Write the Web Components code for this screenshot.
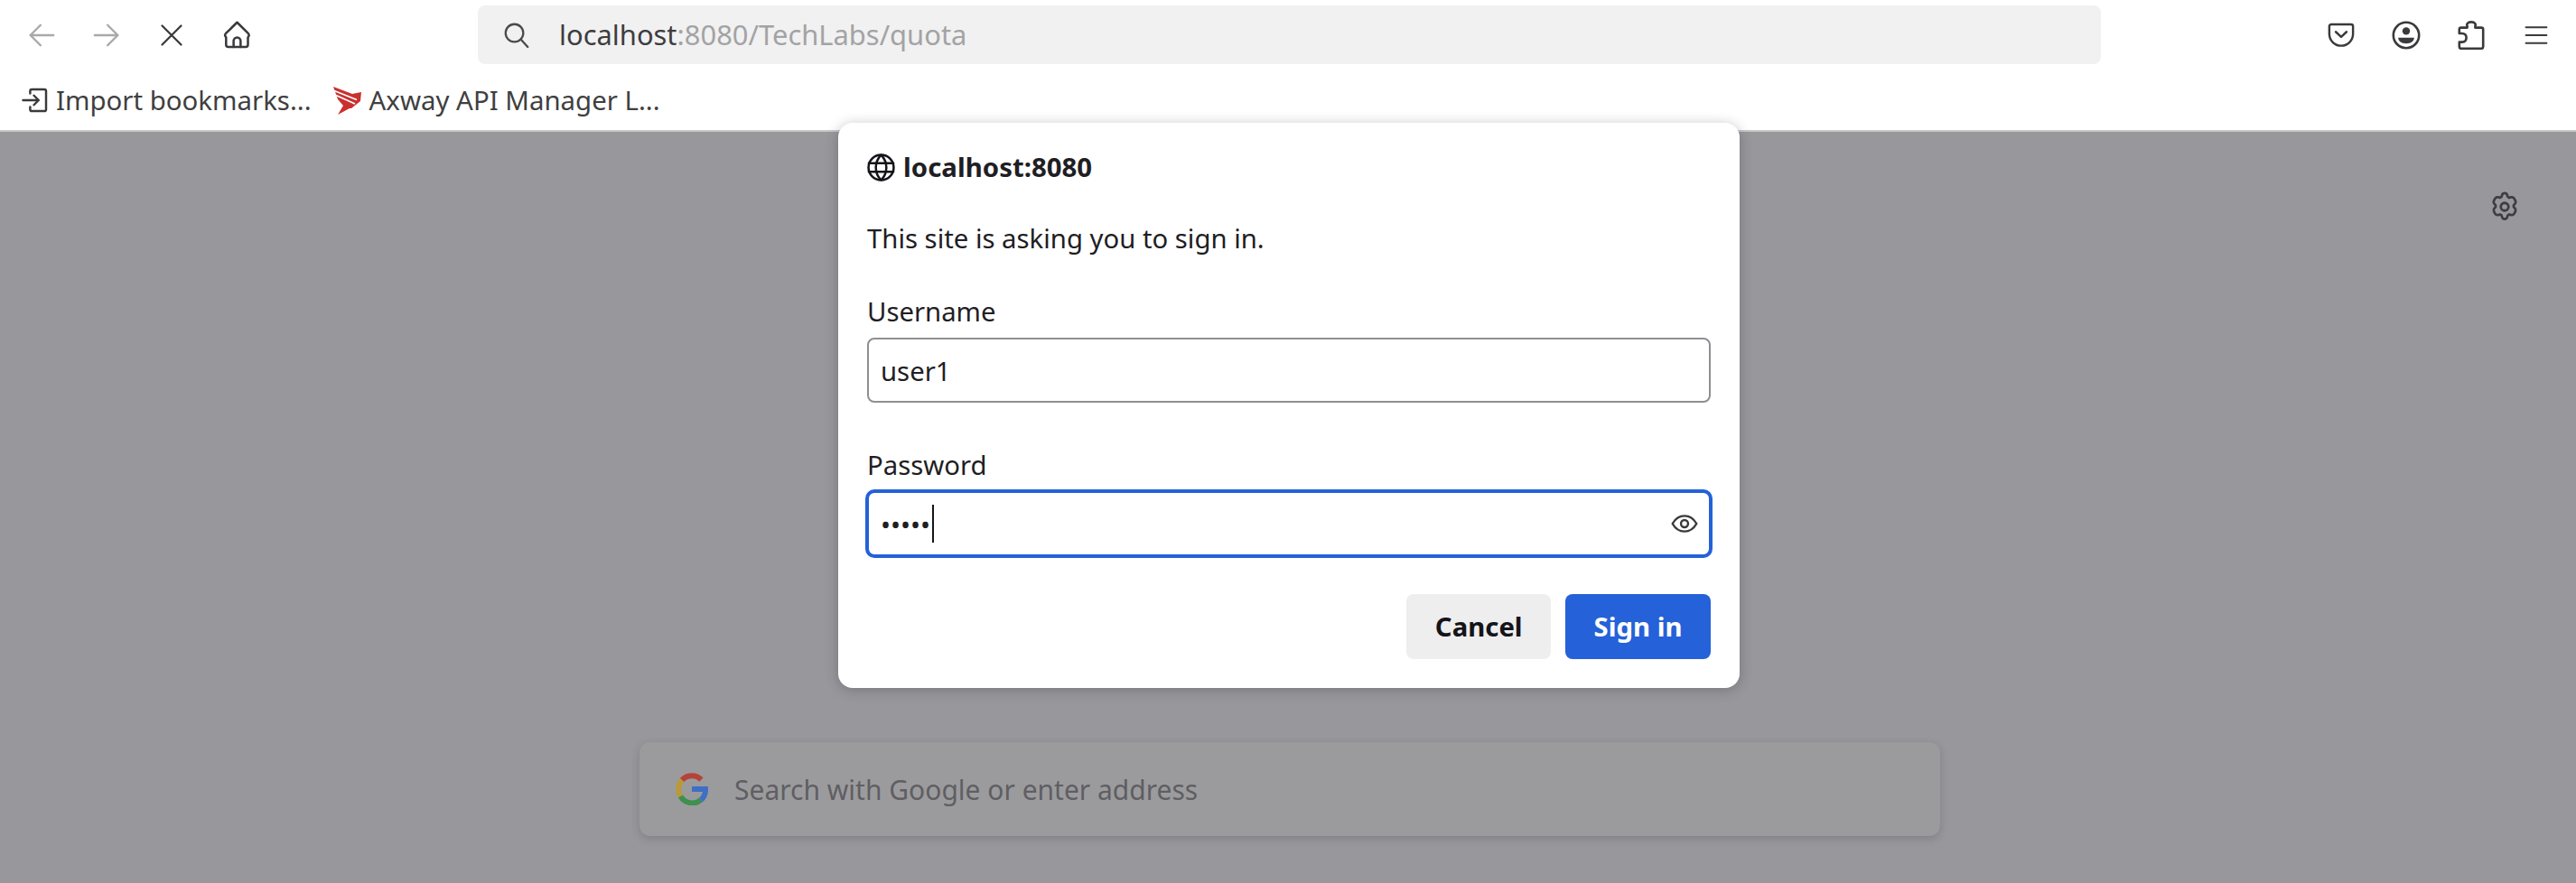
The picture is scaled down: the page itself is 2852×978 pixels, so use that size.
<!DOCTYPE html>
<html lang="en">
<head>
  <meta charset="UTF-8">
  <title>New Tab</title>
  <style>
    html, body{
      margin: 0;
      height: 978px;
      overflow: hidden;
      background: #fff;
      font-family: "Noto Sans", "Liberation Sans", sans-serif;
    }
    body{
      display: flex;
      flex-direction: column;
      position: relative;
    }
  </style>
</head>
<body>
  <nav-bar></nav-bar>
  <bookmarks-bar>
    <bookmark-item>
      <svg slot="icon" width="30" height="30" viewBox="0 0 16 16" fill="none" stroke="#3a3a3a" stroke-width="1.3" stroke-linejoin="round" stroke-linecap="round"><path d="M5 4V2.600a1 1 0 0 1 1-1h7.400a1 1 0 0 1 1 1v10.800a1 1 0 0 1-1 1H6a1 1 0 0 1-1-1V12"/><path d="M.8 8H10M7.200 5.200 10 8l-2.800 2.800"/></svg>
      Import bookmarks...
    </bookmark-item>
    <bookmark-item>
      <svg slot="icon" width="32" height="32" viewBox="0 0 32 32"><path d="M0 1 21 9l10-2-1 10-10 8-2 0-13 7 6-10-6-7z" fill="#c9312f"/><path d="M1 5.500 26 15.500M3 10.500 24 20" stroke="#fff" stroke-width="1.800" fill="none"/></svg>
      Axway API Manager L...
    </bookmark-item>
  </bookmarks-bar>
  <new-tab-page></new-tab-page>
  <auth-dialog host-name="localhost:8080">
    <text-field label="Username" value="user1"></text-field>
    <text-field label="Password" value="•••••" focused></text-field>
    <dialog-button slot="actions">Cancel</dialog-button>
    <dialog-button slot="actions" primary>Sign in</dialog-button>
  </auth-dialog>

<script>
    const icons = {
      back: '<path d="M15 8H1.400M7.400 2 1.400 8l6 6"/>',
      forward: '<path d="M1 8h13.600M8.600 2l6 6-6 6"/>',
      stop: '<path d="M2 2l12 12M14 2 2 14"/>',
      home: '<path d="M8 .9 1.600 7.200c-.5.5-.6 1-.4 1.500l.5.8v4.200c0 .8.5 1.300 1.300 1.300h9.900c.8 0 1.300-.5 1.300-1.300V9.500l.5-.8c.2-.5.1-1-.4-1.500L8 .9z"/><path d="M6 15v-3.500a2 2 0 0 1 4 0V15"/>',
      pocket: '<path d="M2.200 1.600h11.600c.7 0 1.200.5 1.200 1.200v4.400c0 3.900-3.100 7-7 7s-7-3.100-7-7V2.800c0-.7.5-1.200 1.200-1.200z"/><path d="M4.800 6 8 9l3.200-3"/>',
      account: '<circle cx="8" cy="8" r="7.100"/><circle cx="8" cy="5.700" r="2.100" fill="currentColor" stroke="none"/><path d="M3.600 9.400h8.800c0 2-1.900 3.200-4.400 3.200s-4.400-1.200-4.400-3.200z" fill="currentColor" stroke="none"/>',
      extension: '<path d="M2.400 15.400H13.600a1 1 0 0 0 1-1V4.800a1 1 0 0 0-1-1H10.200V2.900C10.700 2.200 10.200 .7 8 .7S5.300 2.200 5.800 2.900V3.800H2.400a1 1 0 0 0-1 1V7h1.500c1.500 0 2.400 .9 2.400 2.400S4.400 11.800 2.900 11.800H1.400v2.600a1 1 0 0 0 1 1z"/>',
      menu: '<path d="M1 2.600h14M1 8h14M1 13.400h14"/>',
      search: '<circle cx="6.600" cy="6.600" r="5.600"/><path d="M10.600 10.600 15 15.400"/>',
      gear: '<path d="M8 .9c.6 0 1.100.3 1.300.9l.3 1 .8.5 1-.3c.6-.1 1.200.1 1.500.6l.7 1.200c.3.5.2 1.100-.2 1.600l-.7.8v.9l.7.8c.4.5.5 1.100.2 1.600l-.7 1.200c-.3.5-.9.7-1.500.6l-1-.3-.8.5-.3 1c-.2.6-.7.9-1.300.9s-1.100-.3-1.300-.9l-.3-1-.8-.5-1 .3c-.6.1-1.200-.1-1.500-.6l-.7-1.200c-.3-.5-.2-1.100.2-1.600l.7-.8v-.9l-.7-.8c-.4-.5-.5-1.100-.2-1.600l.7-1.200c.3-.5.9-.7 1.500-.6l1 .3.8-.5.3-1C6.900 1.200 7.400.9 8 .9z"/><circle cx="8" cy="8" r="2"/>',
      globe: '<circle cx="8" cy="8" r="7.200"/><path d="M1 5.500h14M1 10.500h14"/><path d="M8 .8C5.800 3 5 5.500 5 8s.8 5 3 7.200C10.200 13 11 10.500 11 8s-.8-5-3-7.200z"/>',
      eye: '<path d="M.9 8C2.600 5 5.100 3.400 8 3.400S13.400 5 15.100 8c-1.700 3-4.200 4.600-7.100 4.600S2.600 11 .9 8z"/><circle cx="8" cy="8" r="2.100"/>'
    };

    class ToolIcon extends HTMLElement {
      connectedCallback(){
        const size = this.getAttribute('size') || 30;
        const sw = this.getAttribute('weight') || 1.3;
        this.attachShadow({ mode: 'open' }).innerHTML = `
          <style>
            :host{
              display: flex;
              align-items: center;
              justify-content: center;
              flex: none;
              color: var(--icon-color, #3a3a3c);
            }
            svg{ display: block; }
          </style>
          <svg width="${size}" height="${size}" viewBox="0 0 16 16" fill="none" stroke="currentColor" stroke-width="${sw}" stroke-linecap="round" stroke-linejoin="round">${icons[this.getAttribute('name')]}</svg>
        `;
      }
    }
    customElements.define('tool-icon', ToolIcon);

    const navTemplate = document.createElement('template');
    navTemplate.innerHTML = `
      <style>
        :host{
          display: flex;
          align-items: center;
          height: 77px;
          padding: 0 8px 0 10px;
          flex: none;
        }
        .btn{
          width: 72px;
          height: 76px;
        }
        .dim{ --icon-color: #a9a9ab; }
        .url{
          display: flex;
          align-items: center;
          width: 1797px;
          height: 65px;
          margin-left: 231px;
          box-sizing: border-box;
          padding-left: 29px;
          gap: 33px;
          border-radius: 8px;
          background: #f1f1f1;
          font-size: 30.9px;
          color: #3d3d3f;
          --icon-color: #4a4a4c;
        }
        .url div{ padding-bottom: 2px; }
        .url span{ color: #a3a3a5; }
        .end{
          display: flex;
          margin-left: auto;
        }
      </style>
      <tool-icon class="btn dim" name="back"></tool-icon>
      <tool-icon class="btn dim" name="forward"></tool-icon>
      <tool-icon class="btn" name="stop" size="28"></tool-icon>
      <tool-icon class="btn" name="home" size="31"></tool-icon>
      <div class="url">
        <tool-icon name="search" size="28"></tool-icon>
        <div>localhost<span>:8080/TechLabs/quota</span></div>
      </div>
      <div class="end">
        <tool-icon class="btn" name="pocket"></tool-icon>
        <tool-icon class="btn" name="account" size="32"></tool-icon>
        <tool-icon class="btn" name="extension" size="32"></tool-icon>
        <tool-icon class="btn" name="menu" size="26"></tool-icon>
      </div>
    `;
    class NavBar extends HTMLElement {
      constructor(){
        super();
        this.attachShadow({ mode: 'open' });
        this.shadowRoot.appendChild(navTemplate.content.cloneNode(true));
      }
    }
    customElements.define('nav-bar', NavBar);

    class BookmarksBar extends HTMLElement {
      constructor(){
        super();
        this.attachShadow({ mode: 'open' }).innerHTML = `
          <style>
            :host{
              display: flex;
              align-items: center;
              flex: none;
              height: 69px;
              box-sizing: border-box;
              padding: 0 0 0 24px;
              gap: 24px;
              border-bottom: 2px solid #c8c8c8;
            }
          </style>
          <slot></slot>
        `;
      }
    }
    customElements.define('bookmarks-bar', BookmarksBar);

    class BookmarkItem extends HTMLElement {
      constructor(){
        super();
        this.attachShadow({ mode: 'open' }).innerHTML = `
          <style>
            :host{
              display: flex;
              align-items: center;
              gap: 8px;
              font-size: 29.4px;
              color: #3f3f41;
            }
            ::slotted(svg){ display: block; flex: none; }
          </style>
          <slot name="icon"></slot>
          <div><slot></slot></div>
        `;
      }
    }
    customElements.define('bookmark-item', BookmarkItem);

    class NewTabPage extends HTMLElement {
      constructor(){
        super();
        this.attachShadow({ mode: 'open' }).innerHTML = `
          <style>
            :host{
              display: flex;
              flex-direction: column;
              flex: 1;
              background: #98979c;
              padding-top: 66px;
              --icon-color: #3e3e42;
            }
            .top{
              display: flex;
              justify-content: flex-end;
              padding-right: 62px;
            }
            .search{
              display: flex;
              align-items: center;
              width: 1440px;
              height: 104px;
              margin: 576px 0 0 708px;
              box-sizing: border-box;
              padding-left: 40px;
              gap: 29px;
              border-radius: 12px;
              background: #9b9b9d;
              box-shadow: 0 3px 10px rgba(50,50,55,.22);
              color: #5f5e63;
              font-size: 30px;
            }
          </style>
          <div class="top"><tool-icon name="gear" size="34"></tool-icon></div>
          <div class="search">
            <svg width="36" height="36" viewBox="0 0 36 36" fill="none" stroke-width="6">
              <path d="M28.500 7.500A15 15 0 0 0 7 8" stroke="#b5433a"/>
              <path d="M7 8A15 15 0 0 0 5.500 26" stroke="#b89a38"/>
              <path d="M5.500 26A15 15 0 0 0 28 30" stroke="#3f8f4f"/>
              <path d="M28 30A15 15 0 0 0 33 18H18" stroke="#3f6fc4"/>
            </svg>
            <div>Search with Google or enter address</div>
          </div>
        `;
      }
    }
    customElements.define('new-tab-page', NewTabPage);

    class TextField extends HTMLElement {
      connectedCallback(){
        const focused = this.hasAttribute('focused');
        this.attachShadow({ mode: 'open' }).innerHTML = `
          <style>
            :host{
              display: block;
              font-size: 29.3px;
              color: #1f1e24;
            }
            label{
              display: block;
              line-height: 40px;
              margin-bottom: 9px;
            }
            .box{
              display: flex;
              align-items: center;
              height: 72px;
              box-sizing: border-box;
              padding: 0 13px;
              border: 2px solid #8f8f93;
              border-radius: 8px;
              background: #fff;
            }
            .value{ padding-top: 2px; }
            :host([focused]) .box{
              border-color: #2561d8;
              box-shadow: 0 0 0 2px #2561d8;
            }
            .caret{
              width: 2px;
              height: 42px;
              margin-left: 2px;
              background: #15141a;
            }
            tool-icon{ margin-left: auto; margin-right: -1px; }
          </style>
          <label>${this.getAttribute('label')}</label>
          <div class="box">
            <div class="value">${this.getAttribute('value')}</div>
            ${focused ? '<div class="caret"></div><tool-icon name="eye" size="30"></tool-icon>' : ''}
          </div>
        `;
      }
    }
    customElements.define('text-field', TextField);

    class DialogButton extends HTMLElement {
      constructor(){
        super();
        this.attachShadow({ mode: 'open' }).innerHTML = `
          <style>
            :host{
              display: flex;
              align-items: center;
              justify-content: center;
              height: 72px;
              padding: 0 31.5px;
              border-radius: 8px;
              background: #eeeeee;
              color: #15141a;
              font-size: 29.3px;
              font-weight: 700;
            }
            :host([primary]){
              background: #2561d8;
              color: #fff;
            }
          </style>
          <slot></slot>
        `;
      }
    }
    customElements.define('dialog-button', DialogButton);

    class AuthDialog extends HTMLElement {
      connectedCallback(){
        this.attachShadow({ mode: 'open' }).innerHTML = `
          <style>
            :host{
              position: absolute;
              left: 928px;
              top: 136px;
              width: 998px;
              box-sizing: border-box;
              padding: 34px 32px 32px;
              border-radius: 16px;
              background: #fff;
              box-shadow: 0 2px 14px rgba(40,40,45,.3);
              color: #1f1e24;
            }
            .title{
              display: flex;
              align-items: center;
              gap: 9px;
              height: 30px;
              font-size: 29.4px;
              font-weight: 700;
              --icon-color: #15141a;
            }
            p{
              margin: 44px 0 41px;
              font-size: 29.3px;
              line-height: 40px;
            }
            .fields{
              display: flex;
              flex-direction: column;
              gap: 49px;
            }
            .actions{
              display: flex;
              justify-content: flex-end;
              gap: 16px;
              margin-top: 42px;
            }
          </style>
          <div class="title">
            <tool-icon name="globe" size="31"></tool-icon>
            <div>${this.getAttribute('host-name')}</div>
          </div>
          <p>This site is asking you to sign in.</p>
          <div class="fields"><slot></slot></div>
          <div class="actions"><slot name="actions"></slot></div>
        `;
      }
    }
    customElements.define('auth-dialog', AuthDialog);
  </script>
</body>
</html>
